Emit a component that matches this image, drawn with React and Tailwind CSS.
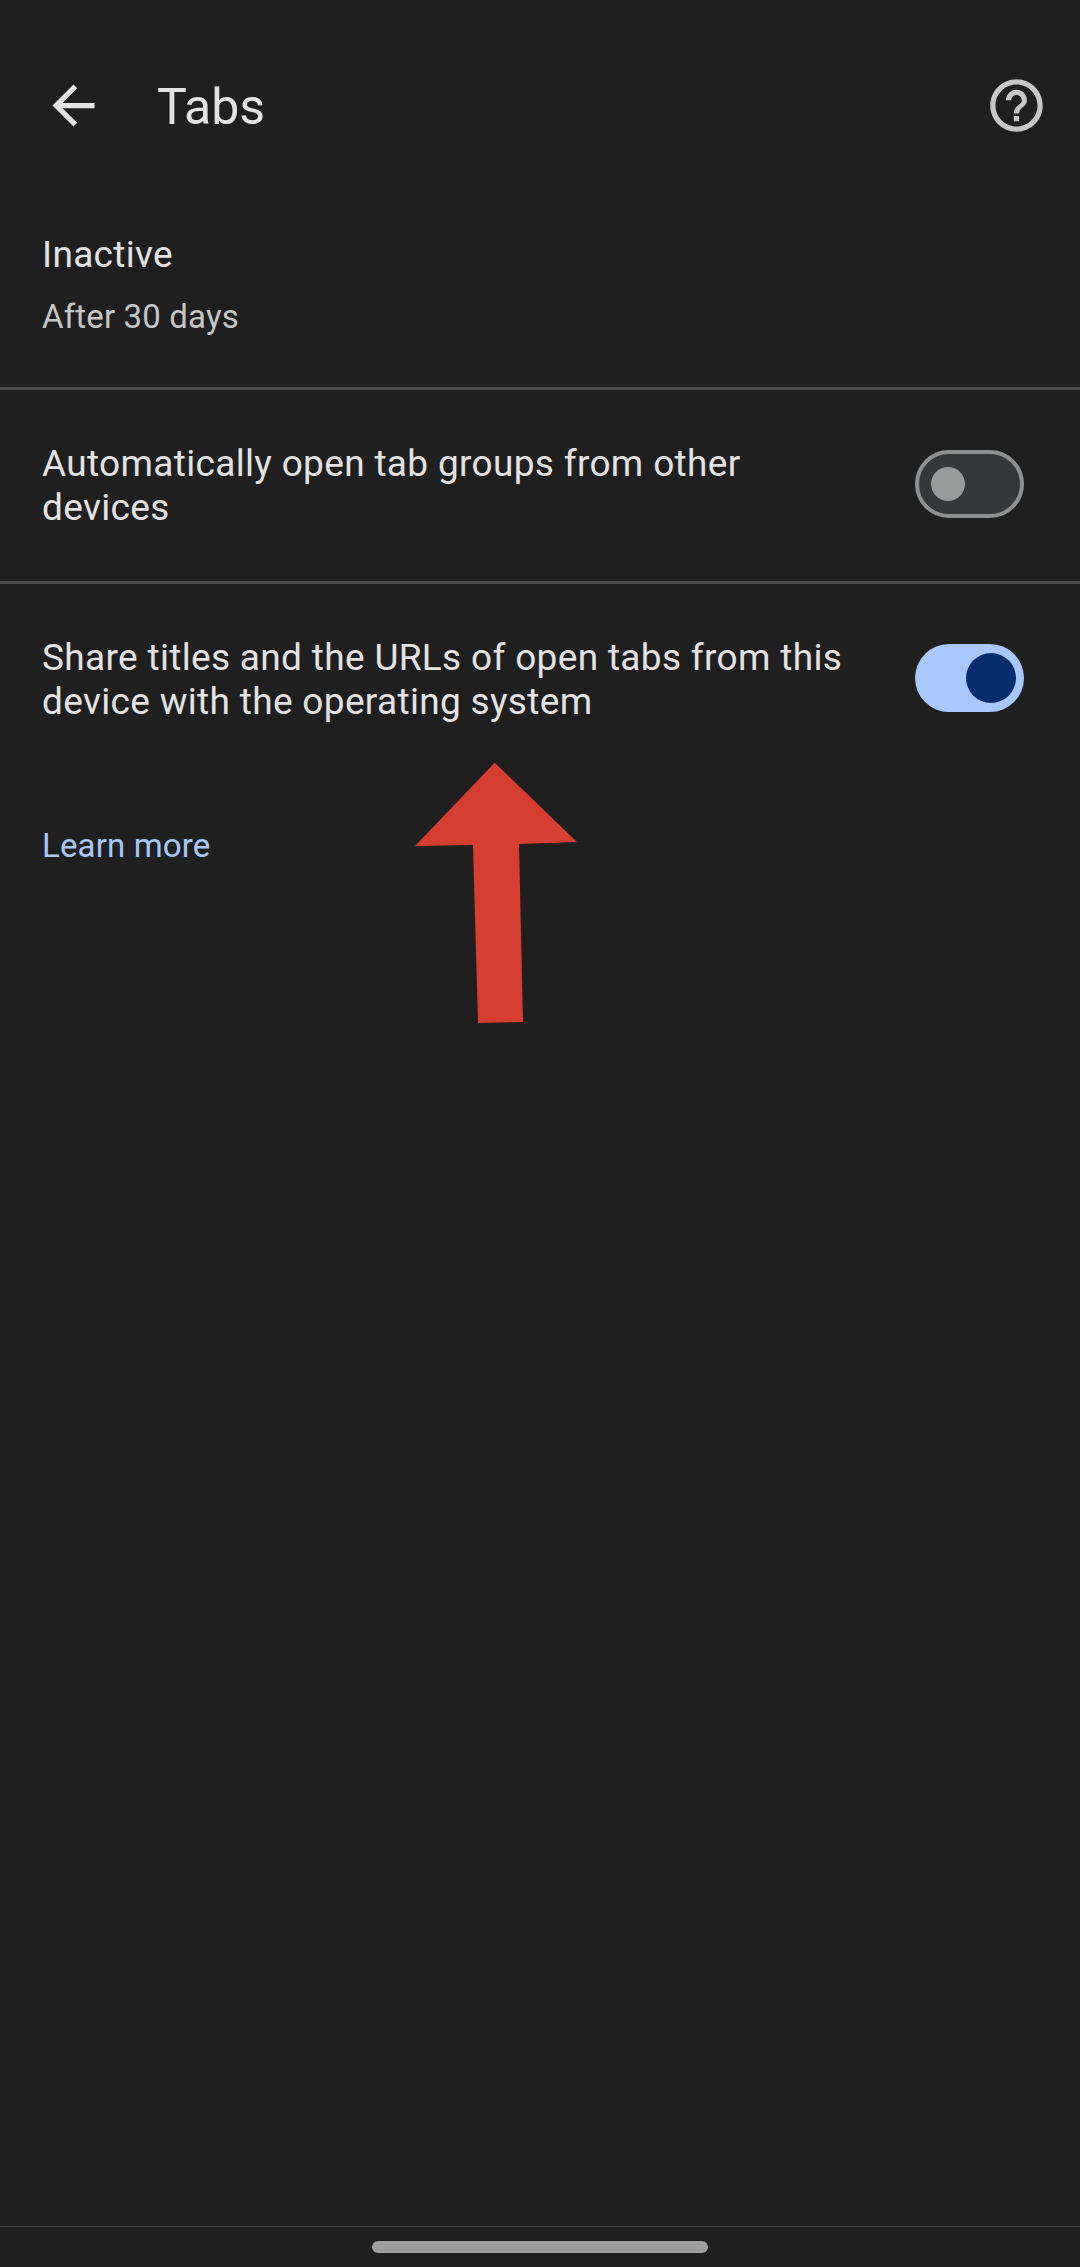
import React from "react";

function Toggle({ on }) {
  if (on) {
    return (
      <div className="w-[109px] h-[68px] shrink-0 rounded-full bg-[#a8c7fa] flex items-center justify-end pr-[8px]">
        <div className="w-[50px] h-[50px] rounded-full bg-[#062e6f]" />
      </div>
    );
  }
  return (
    <div className="w-[109px] h-[68px] shrink-0 rounded-full bg-[#35373a] border-[4px] border-[#8e918f] flex items-center pl-[12px]">
      <div className="w-[34px] h-[34px] rounded-full bg-[#979a98]" />
    </div>
  );
}

function ToggleRow({ on, children }) {
  return (
    <div className="h-[191px] pb-[3px] flex items-center justify-between pl-[42px] pr-[56px]">
      <p className="w-[810px] pt-[3px] text-[37px] leading-[44px] tracking-[0.33px] text-[#e3e3e3]">{children}</p>
      <Toggle on={on} />
    </div>
  );
}

export default function App() {
  return (
    <div className="relative h-[2267px] flex flex-col bg-[#1f1f1f] font-['Roboto',sans-serif]">
      {/* Header */}
      <div className="h-[210px] shrink-0 flex items-center justify-between pl-[42px] pr-[32px]">
        <div className="flex items-center gap-[52px]">
          <svg viewBox="0 0 24 24" className="w-[63px] h-[63px]" fill="#e3e3e3">
            <path d="M20 11H7.83l5.59-5.59L12 4l-8 8 8 8 1.41-1.41L7.83 13H20v-2z" />
          </svg>
          <h1 className="mt-[3px] text-[50px] leading-[60px] font-normal text-[#e3e3e3]">Tabs</h1>
        </div>
        <svg viewBox="0 0 24 24" className="w-[63px] h-[63px]" fill="#c7c7c7">
          <path d="M11 18h2v-2h-2v2zm1-16C6.48 2 2 6.48 2 12s4.48 10 10 10 10-4.48 10-10S17.52 2 12 2zm0 18c-4.41 0-8-3.59-8-8s3.59-8 8-8 8 3.59 8 8-3.59 8-8 8zm0-14c-2.21 0-4 1.79-4 4h2c0-1.1.9-2 2-2s2 .9 2 2c0 2-3 1.75-3 5h2c0-2.25 3-2.5 3-5 0-2.21-1.79-4-4-4z" />
        </svg>
      </div>

      {/* Inactive */}
      <div className="h-[180px] shrink-0 pl-[42px] pt-[23px] border-b-[3px] border-[#4d4d4d]">
        <p className="text-[37px] leading-[44px] tracking-[0.33px] text-[#e3e3e3]">Inactive</p>
        <p className="mt-[18px] text-[33px] leading-[44px] tracking-[0.15px] text-[#c4c7c5]">After 30 days</p>
      </div>

      <div className="border-b-[3px] border-[#4d4d4d]">
        <ToggleRow>Automatically open tab groups from other devices</ToggleRow>
      </div>
      <ToggleRow on>Share titles and the URLs of open tabs from this device with the operating system</ToggleRow>

      <a className="mt-[49px] pl-[42px] text-[33px] leading-[44px] tracking-[0.15px] text-[#a8c7fa]">Learn more</a>

      <div className="flex-1" />

      {/* Gesture bar */}
      <div className="h-[41px] shrink-0 border-t border-[#474747] flex justify-center pt-[14px]">
        <div className="w-[336px] h-[12px] rounded-full bg-[#9e9e9e]" />
      </div>

      {/* Red annotation arrow */}
      <svg className="absolute left-0 top-0 w-[1080px] h-[2267px] pointer-events-none" viewBox="0 0 1080 2267">
        <polygon fill="#d63e30" points="494.7,762.7 577,842 519,844 523,1022 478,1023 473,845 415,846" />
      </svg>
    </div>
  );
}
